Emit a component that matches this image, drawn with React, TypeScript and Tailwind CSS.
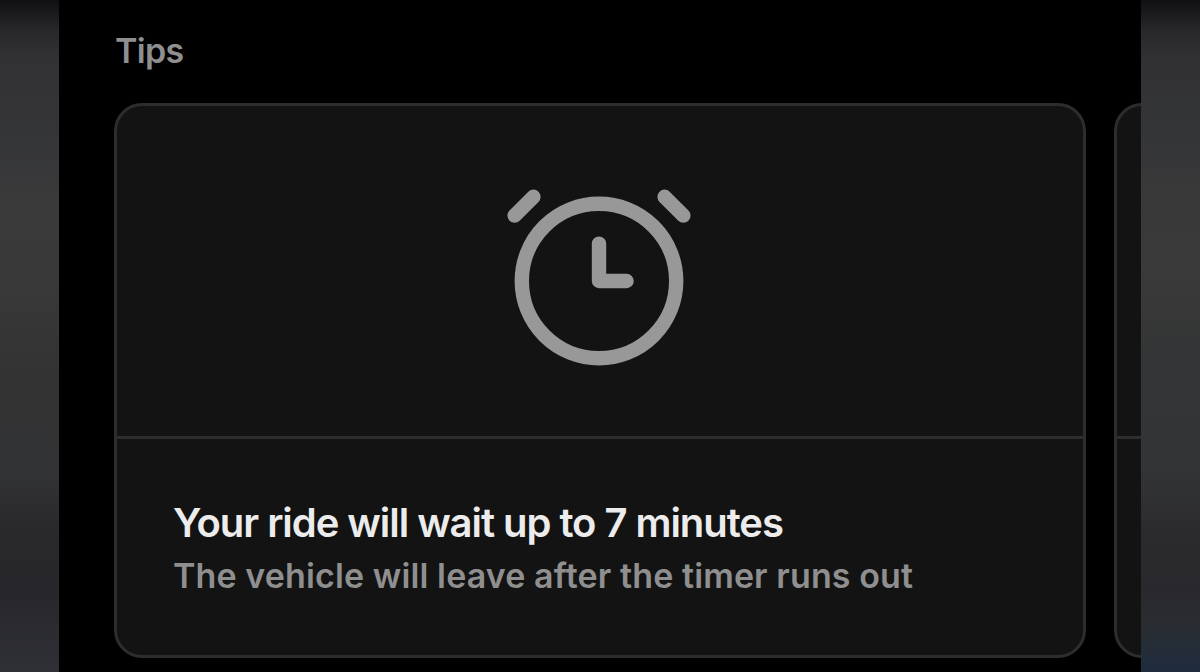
import type { ReactNode } from "react";

interface TipCardProps {
  icon?: ReactNode;
  title?: string;
  subtitle?: string;
}

function AlarmIcon() {
  return (
    <svg
      width="200"
      height="200"
      viewBox="0 0 200 200"
      fill="none"
      stroke="#989898"
      strokeWidth="14.4"
      strokeLinecap="round"
      strokeLinejoin="round"
    >
      <circle cx="100" cy="100" r="77.2" />
      <path d="M100 62.6V100H127.6" />
      <path d="M15.6 34.6L34.4 15.8" />
      <path d="M184.4 34.6L165.6 15.8" />
    </svg>
  );
}

function TipCard({ icon, title, subtitle }: TipCardProps) {
  return (
    <div className="flex h-[555px] w-[972px] shrink-0 flex-col overflow-hidden rounded-[28px] border-[3px] border-[#2d2d2d] bg-[#131313]">
      <div className="flex h-[333px] items-center justify-center border-b-[3px] border-[#2d2d2d] pt-[20px] pr-[3px]">
        {icon}
      </div>
      <div className="flex flex-col px-14 pt-[60px] whitespace-nowrap">
        <span className="text-[40px] leading-[48px] font-semibold tracking-[-1.05px] text-[#ececec]">
          {title}
        </span>
        <span className="mt-[7px] text-[34px] leading-[44px] font-semibold tracking-[0.11px] text-[#8f8f8f]">
          {subtitle}
        </span>
      </div>
    </div>
  );
}

export default function App() {
  return (
    <div className="flex h-[672px] w-[1200px] overflow-hidden bg-black font-['Inter',sans-serif]">
      <div className="w-[59px] shrink-0 bg-[linear-gradient(to_bottom,#111114_0px,#1c1c1e_15px,#29292b_32px,#323133_60px,#343537_130px,#3a3a3b_200px,#39393a_280px,#333334_370px,#323334_470px,#29292c_530px,#27272b_590px,#2f3036_672px)]" />
      <main className="flex w-[1082px] shrink-0 flex-col overflow-hidden pt-[29px] pl-[55px]">
        <h2 className="pl-px text-[34px] leading-[44px] font-semibold tracking-[-0.7px] text-[#8f8f8f]">
          Tips
        </h2>
        <div className="mt-[30px] flex gap-7">
          <TipCard
            icon={<AlarmIcon />}
            title="Your ride will wait up to 7 minutes"
            subtitle="The vehicle will leave after the timer runs out"
          />
          <TipCard />
        </div>
      </main>
      <div className="w-[59px] shrink-0 bg-[linear-gradient(to_bottom,#111113_0px,#1c1c1e_15px,#29292b_32px,#313133_60px,#343537_130px,#39393a_200px,#3a3a3a_270px,#343536_350px,#333435_470px,#2b2b2e_530px,#29292d_590px,#2a2d31_625px,#242d38_650px,#1f2b40_672px)]" />
    </div>
  );
}
